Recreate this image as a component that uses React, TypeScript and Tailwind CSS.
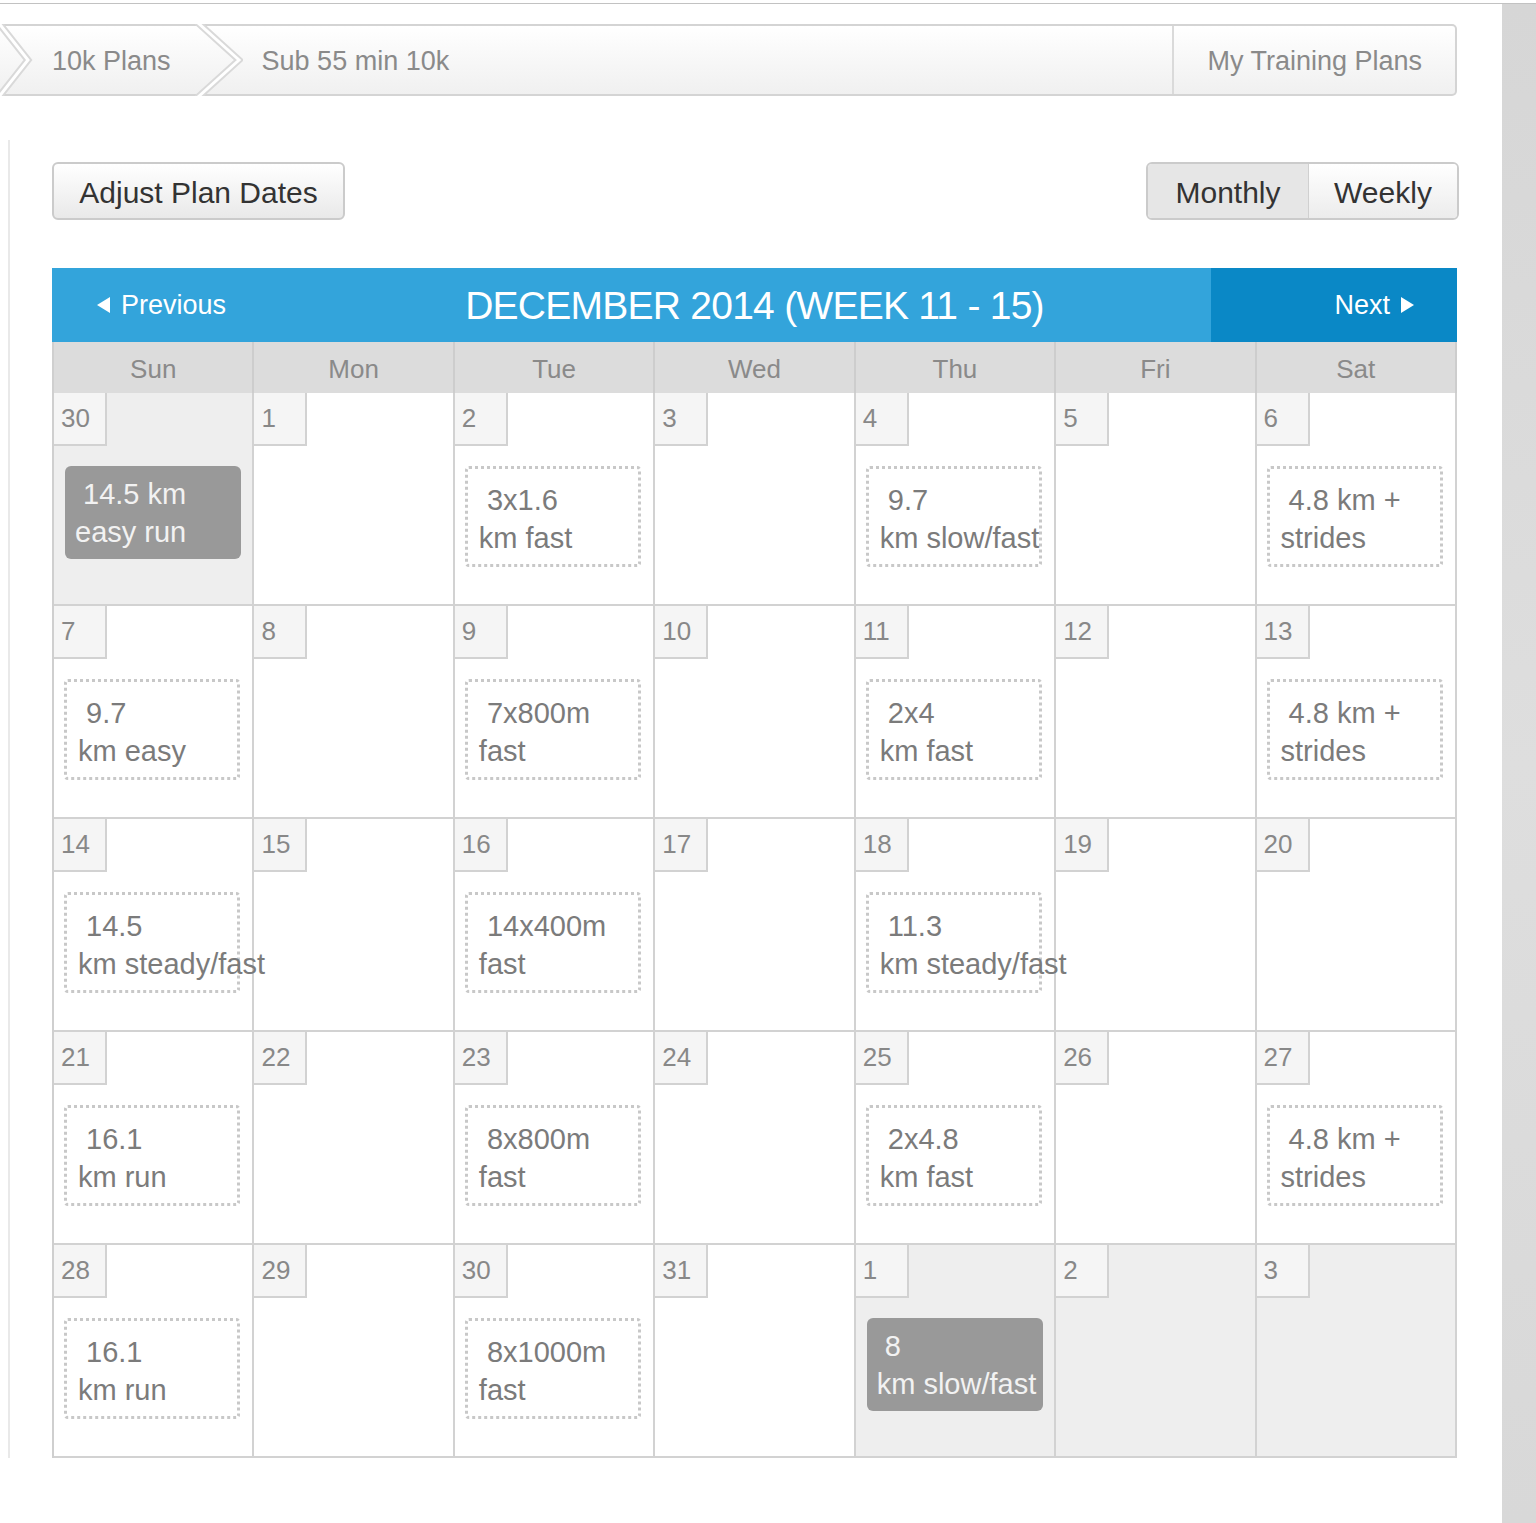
import React from "react";

type Day = { d: number; out?: boolean; w?: [string, string]; filled?: boolean };

const weeks: Day[][] = [
  [
    { d: 30, out: true, w: ["14.5 km", "easy run"], filled: true },
    { d: 1 },
    { d: 2, w: ["3x1.6", "km fast"] },
    { d: 3 },
    { d: 4, w: ["9.7", "km slow/fast"] },
    { d: 5 },
    { d: 6, w: ["4.8 km +", "strides"] },
  ],
  [
    { d: 7, w: ["9.7", "km easy"] },
    { d: 8 },
    { d: 9, w: ["7x800m", "fast"] },
    { d: 10 },
    { d: 11, w: ["2x4", "km fast"] },
    { d: 12 },
    { d: 13, w: ["4.8 km +", "strides"] },
  ],
  [
    { d: 14, w: ["14.5", "km steady/fast"] },
    { d: 15 },
    { d: 16, w: ["14x400m", "fast"] },
    { d: 17 },
    { d: 18, w: ["11.3", "km steady/fast"] },
    { d: 19 },
    { d: 20 },
  ],
  [
    { d: 21, w: ["16.1", "km run"] },
    { d: 22 },
    { d: 23, w: ["8x800m", "fast"] },
    { d: 24 },
    { d: 25, w: ["2x4.8", "km fast"] },
    { d: 26 },
    { d: 27, w: ["4.8 km +", "strides"] },
  ],
  [
    { d: 28, w: ["16.1", "km run"] },
    { d: 29 },
    { d: 30, w: ["8x1000m", "fast"] },
    { d: 31 },
    { d: 1, out: true, w: ["8", "km slow/fast"], filled: true },
    { d: 2, out: true },
    { d: 3, out: true },
  ],
];

const dayNames = ["Sun", "Mon", "Tue", "Wed", "Thu", "Fri", "Sat"];

// double line chevron between crumbs
function Chevron({ w, pts }: { w: number; pts: string }) {
  return (
    <svg width={w} height="72" viewBox={`0 0 ${w} 72`} className="shrink-0">
      <polyline points={pts} fill="none" stroke="#d9d9d9" strokeWidth="7" />
      <polyline points={pts} fill="none" stroke="#ffffff" strokeWidth="3" />
    </svg>
  );
}

function Workout({ lines, filled }: { lines: [string, string]; filled?: boolean }) {
  if (filled) {
    return (
      <div className="relative z-10 ml-[11px] mt-[20px] h-[93px] w-[176px] rounded-[6px] bg-[#999999] pl-[10px] pt-[9px] text-[29px] leading-[38px] whitespace-nowrap text-[#f2f2f2]">
        <div>{"\u00a0" + lines[0]}</div>
        <div>{lines[1]}</div>
      </div>
    );
  }
  return (
    <div className="relative z-10 ml-[10px] mt-[20px] h-[101px] w-[176px] rounded-[4px] border-[3px] border-dotted border-[#c8c8c8] pl-[11px] pt-[12px] text-[29px] leading-[38px] whitespace-nowrap text-[#7b7b7b]">
      <div>{"\u00a0" + lines[0]}</div>
      <div>{lines[1]}</div>
    </div>
  );
}

export default function App() {
  return (
    <div className="min-h-[1523px] w-[1536px] bg-white font-['Liberation_Sans',Arial,sans-serif]">
      <div className="h-[3px]" />
      <div className="h-px bg-[#c2c2c2]" />
      <div className="flex">
        <div className="w-[1502px] pb-[65px]">
          {/* breadcrumb */}
          <div className="mt-[20px] flex h-[72px] w-[1457px] items-center rounded-r-[5px] border-y-2 border-r-2 border-[#d4d4d4] bg-gradient-to-b from-white to-[#f0f0f0] text-[27px] text-[#8a8a8a]">
            <Chevron w={34} pts="-2,-2 28,36 -2,74" />
            <span className="ml-[18px] pt-[3px]">10k Plans</span>
            <div className="ml-[22px]">
              <Chevron w={50} pts="4,-2 46,36 4,74" />
            </div>
            <span className="ml-[19px] pt-[3px]">Sub 55 min 10k</span>
            <div className="flex-1" />
            <div className="flex h-full items-center border-l-2 border-[#dadada] pl-[33px] pr-[33px] pt-[3px]">My Training Plans</div>
          </div>

          <div className="mt-[44px] ml-[8px] border-l-2 border-[#e9e9e9] pl-[42px] pr-[43px] pt-[22px]">
            {/* buttons */}
            <div className="flex h-[58px] items-stretch justify-between">
              <button className="w-[293px] rounded-[6px] border-2 border-[#cbcbcb] bg-gradient-to-b from-white to-[#e9e9e9] pt-[2px] text-[30px] text-[#333333]">
                Adjust Plan Dates
              </button>
              <div className="flex overflow-hidden rounded-[6px] border-2 border-[#cbcbcb] text-[30px] text-[#333333]">
                <button className="w-[160px] bg-[#e6e6e6] pt-[2px]">Monthly</button>
                <button className="w-[149px] border-l border-[#d0d0d0] bg-gradient-to-b from-white to-[#ececec] pt-[2px]">Weekly</button>
              </div>
            </div>

            {/* calendar */}
            <div className="mt-[48px] w-[1405px]">
              <div className="grid h-[74px] grid-cols-[1fr_auto_1fr] items-stretch bg-[#33a4db] text-white">
                <div className="flex items-center pl-[45px] text-[27px]">
                  <svg width="13" height="16" viewBox="0 0 13 16" className="mr-[11px]">
                    <polygon points="13,0 13,16 0,8" fill="#ffffff" />
                  </svg>
                  Previous
                </div>
                <div className="flex items-center pt-[2px] text-[39px] tracking-[-0.75px]">DECEMBER 2014 (WEEK 11 - 15)</div>
                <div className="flex justify-end">
                  <div className="flex w-[246px] items-center justify-end bg-[#0a88c6] pr-[43px] text-[27px]">
                    Next
                    <svg width="13" height="16" viewBox="0 0 13 16" className="ml-[11px]">
                      <polygon points="0,0 0,16 13,8" fill="#ffffff" />
                    </svg>
                  </div>
                </div>
              </div>

              <div className="grid grid-cols-7 border-l-2 border-[#cfcfcf]">
                {dayNames.map((n) => (
                  <div key={n} className="flex h-[51px] items-center justify-center border-r-2 border-[#cdcdcd] bg-[#dcdcdc] pt-[3px] text-[26px] text-[#8a8a8a]">
                    {n}
                  </div>
                ))}
                {weeks.flat().map((day, i) => (
                  <div
                    key={i}
                    className={`h-[213px] border-r-2 border-b-2 border-[#d2d2d2] ${day.out ? "bg-[#eeeeee]" : "bg-white"}`}
                  >
                    <div className="h-[53px] w-[53px] border-r-2 border-b-2 border-[#d2d2d2] bg-[#f5f5f5] pl-[7px] text-[26px] leading-[51px] text-[#888888]">
                      {day.d}
                    </div>
                    {day.w && <Workout lines={day.w} filled={day.filled} />}
                  </div>
                ))}
              </div>
            </div>
          </div>
        </div>
        <div className="w-[34px] bg-gradient-to-b from-[#d6d6d6] via-[#dedede] to-[#d8d8d8]" />
      </div>
    </div>
  );
}
